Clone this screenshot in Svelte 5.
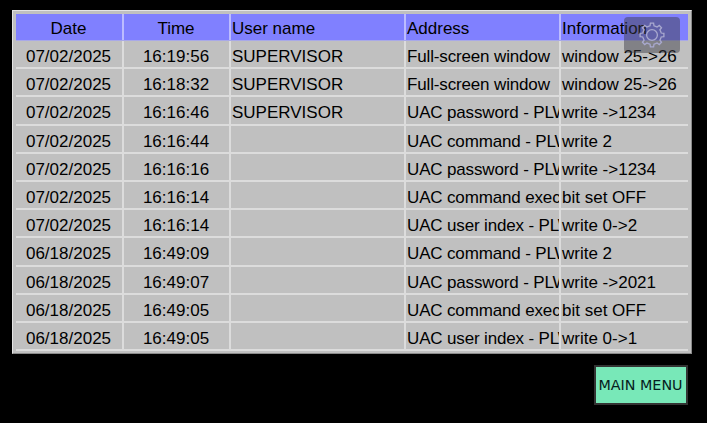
<script lang="ts">
  const columns = ["Date", "Time", "User name", "Address", "Information"];

  const rows = [
    ["07/02/2025", "16:19:56", "SUPERVISOR", "Full-screen window", "window 25->26"],
    ["07/02/2025", "16:18:32", "SUPERVISOR", "Full-screen window", "window 25->26"],
    ["07/02/2025", "16:16:46", "SUPERVISOR", "UAC password - PLWindow", "write ->1234"],
    ["07/02/2025", "16:16:44", "", "UAC command - PLWindow", "write 2"],
    ["07/02/2025", "16:16:16", "", "UAC password - PLWindow", "write ->1234"],
    ["07/02/2025", "16:16:14", "", "UAC command execute", "bit set OFF"],
    ["07/02/2025", "16:16:14", "", "UAC user index - PLWindow", "write 0->2"],
    ["06/18/2025", "16:49:09", "", "UAC command - PLWindow", "write 2"],
    ["06/18/2025", "16:49:07", "", "UAC password - PLWindow", "write ->2021"],
    ["06/18/2025", "16:49:05", "", "UAC command execute", "bit set OFF"],
    ["06/18/2025", "16:49:05", "", "UAC user index - PLWindow", "write 0->1"],
  ];

  // outline of an 8-tooth cog, centred on 14,14
  function cogPath(teeth: number, outer: number, inner: number) {
    const step = (Math.PI * 2) / teeth;
    const pts: string[] = [];
    for (let i = 0; i < teeth; i++) {
      const a = i * step - Math.PI / 2;
      const offs: [number, number][] = [
        [-0.5, inner],
        [-0.27, inner],
        [-0.17, outer],
        [0.17, outer],
        [0.27, inner],
      ];
      for (const [o, r] of offs) {
        const t = a + o * step;
        pts.push(`${(14 + r * Math.cos(t)).toFixed(2)} ${(14 + r * Math.sin(t)).toFixed(2)}`);
      }
    }
    return "M" + pts.join("L") + "Z";
  }
  const cog = cogPath(8, 12, 9.4);
</script>

<div class="screen">
  <div class="log">
    <div class="row head">
      {#each columns as c, i}
        <div class="cell" class:center={i < 2}>{c}</div>
      {/each}
    </div>
    {#each rows as r}
      <div class="row">
        {#each r as v, i}
          <div class="cell" class:center={i < 2} class:addr={i === 3}>{v}</div>
        {/each}
      </div>
    {/each}
  </div>

  <div class="foot">
    <button type="button" class="menu">MAIN MENU</button>
  </div>

  <div class="gear">
    <svg width="28" height="28" viewBox="0 0 28 28" fill="none" stroke="#a9a9cf" stroke-width="1.3">
      <path d={cog} />
      <circle cx="14" cy="14" r="5.4" />
    </svg>
  </div>
</div>

<style>
  :global(body) {
    margin: 0;
    background: #000;
  }
  .screen {
    position: relative;
    box-sizing: border-box;
    width: 707px;
    height: 423px;
    padding: 10px 15px 0 12px;
    background: #000;
    font-family: "Liberation Sans", Arial, sans-serif;
    font-size: 17px;
    color: #000;
  }
  .log {
    box-sizing: border-box;
    width: 680px;
    height: 344px;
    padding: 3px 3px 2px 3px;
    background: #c0c0c0;
    border: 1px solid #e4e4e4;
    border-right-color: #8a8a8a;
    border-bottom-color: #8a8a8a;
  }
  .row {
    display: grid;
    grid-template-columns: 108px 107px 175px 155px 127px;
    height: 28.2px;
    border-bottom: 2px solid #dcdcdc;
    box-sizing: border-box;
  }
  .row.head {
    height: 27px;
    background: #8080ff;
    border-bottom: 1px solid #a9a9e8;
  }
  .cell {
    box-sizing: border-box;
    padding: 0 0 0 1px;
    border-right: 2px solid #dcdcdc;
    line-height: 32px;
    white-space: nowrap;
    overflow: hidden;
  }
  .head .cell {
    border-right-color: #bcbcff;
    line-height: 29px;
  }
  .cell:last-child {
    border-right: 0;
  }
  .center {
    padding: 0 1px 0 0;
    text-align: center;
  }
  .addr {
    letter-spacing: -0.15px;
  }
  .foot {
    display: flex;
    justify-content: flex-end;
    padding: 11px 4px 0 0;
  }
  .menu {
    box-sizing: border-box;
    width: 94px;
    height: 40px;
    padding: 0 1px 0 0;
    background: #78e8b8;
    border: 2px solid #333;
    color: #062020;
    font-family: "DejaVu Sans", sans-serif;
    font-size: 14.3px;
  }
  .gear {
    position: absolute;
    left: 624px;
    top: 17px;
    width: 56px;
    height: 36px;
    display: flex;
    align-items: center;
    justify-content: center;
    border-radius: 4px;
    background: rgba(60, 60, 72, 0.48);
  }
</style>
